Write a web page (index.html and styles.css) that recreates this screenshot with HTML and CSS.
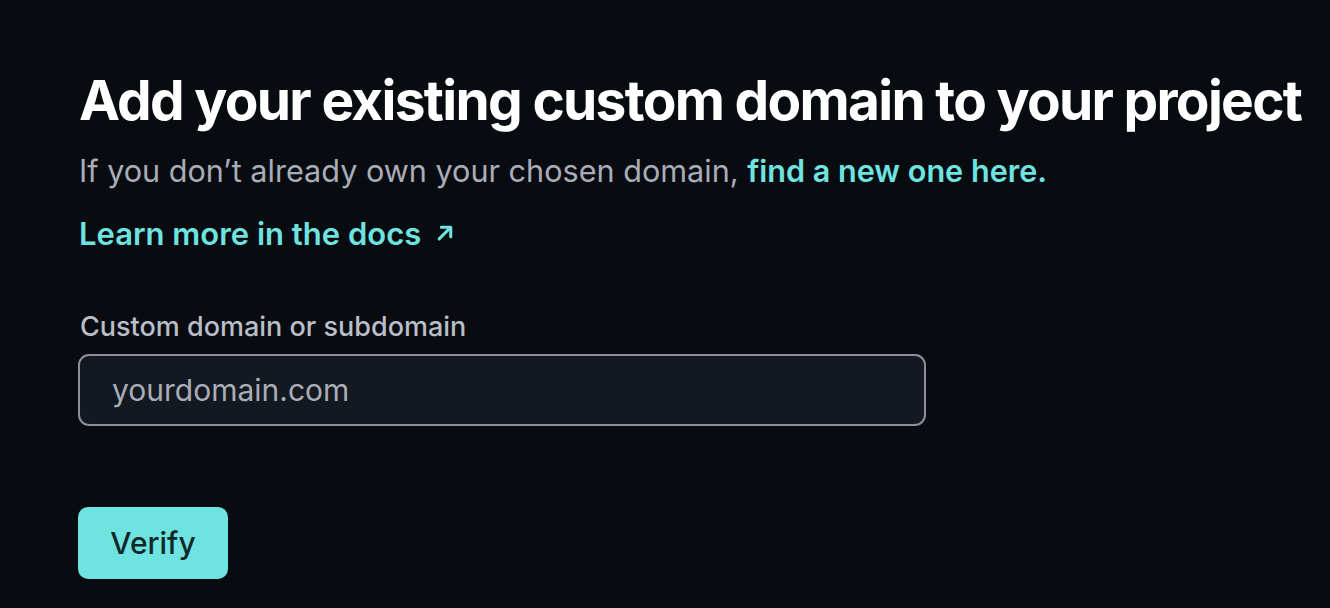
FILE: index.html
```html
<!DOCTYPE html>
<html>
<head>
<meta charset="utf-8">
<link rel="stylesheet" href="styles.css">
</head>
<body>
<main class="page">
  <h1 class="title">Add your existing custom domain to your project</h1>
  <p class="sub">If you don’t already own your chosen domain, <a class="link" href="#">find a new one here.</a></p>
  <a class="docs" href="#">Learn more in the docs <svg class="arrow" viewBox="0 0 20 20" width="21" height="21"><path d="M4 16 L15 5 M6 5 H15 V14" fill="none" stroke="currentColor" stroke-width="2.9" stroke-linecap="round" stroke-linejoin="round"/></svg></a>
  <form class="form">
    <label class="label" for="domain">Custom domain or subdomain</label>
    <input class="input" id="domain" type="text" placeholder="yourdomain.com">
    <button class="btn" type="button">Verify</button>
  </form>
</main>
</body>
</html>
```
FILE: styles.css
```css
html, body {
  margin: 0;
  padding: 0;
  background: #080b10;
  font-family: Inter, "Noto Sans", sans-serif;
}
.page {
  padding: 62px 0 0 79px;
  display: flex;
  flex-direction: column;
  align-items: flex-start;
}
.title {
  margin: 0;
  font-size: 55px;
  font-weight: 700;
  color: #ffffff;
  letter-spacing: -1.7px;
  line-height: 76px;
  white-space: nowrap;
}
.sub {
  margin: 13px 0 0;
  font-size: 30.6px;
  color: #a8adb8;
  line-height: 40px;
  white-space: nowrap;
}
.link {
  color: #6ee3e0;
  font-weight: 600;
  text-decoration: none;
}
.docs {
  margin-top: 23px;
  color: #6ee3e0;
  font-weight: 600;
  font-size: 31px;
  line-height: 40px;
  text-decoration: none;
  display: flex;
  align-items: center;
  gap: 14px;
}
.arrow { margin-top: -4px; }
.form {
  margin-top: 57px;
  display: flex;
  flex-direction: column;
  align-items: flex-start;
}
.label {
  font-size: 27px;
  font-weight: 500;
  color: #b9bec8;
  line-height: 32px;
  margin-left: 1px;
}
.input {
  margin: 11px 0 0 -1px;
  box-sizing: border-box;
  width: 848px;
  height: 72px;
  border: 2px solid #8a8f99;
  border-radius: 11px;
  background: #141820;
  padding: 0 32px;
  font-family: inherit;
  font-size: 30px;
  color: #e0e3e8;
  outline: none;
}
.input::placeholder { color: #a8adb8; }
.btn {
  margin: 81px 0 0 -1px;
  width: 150px;
  height: 72px;
  border: none;
  border-radius: 10px;
  background: #6ee3e0;
  color: #10282a;
  font-family: inherit;
  font-size: 30px;
  font-weight: 500;
}
```
